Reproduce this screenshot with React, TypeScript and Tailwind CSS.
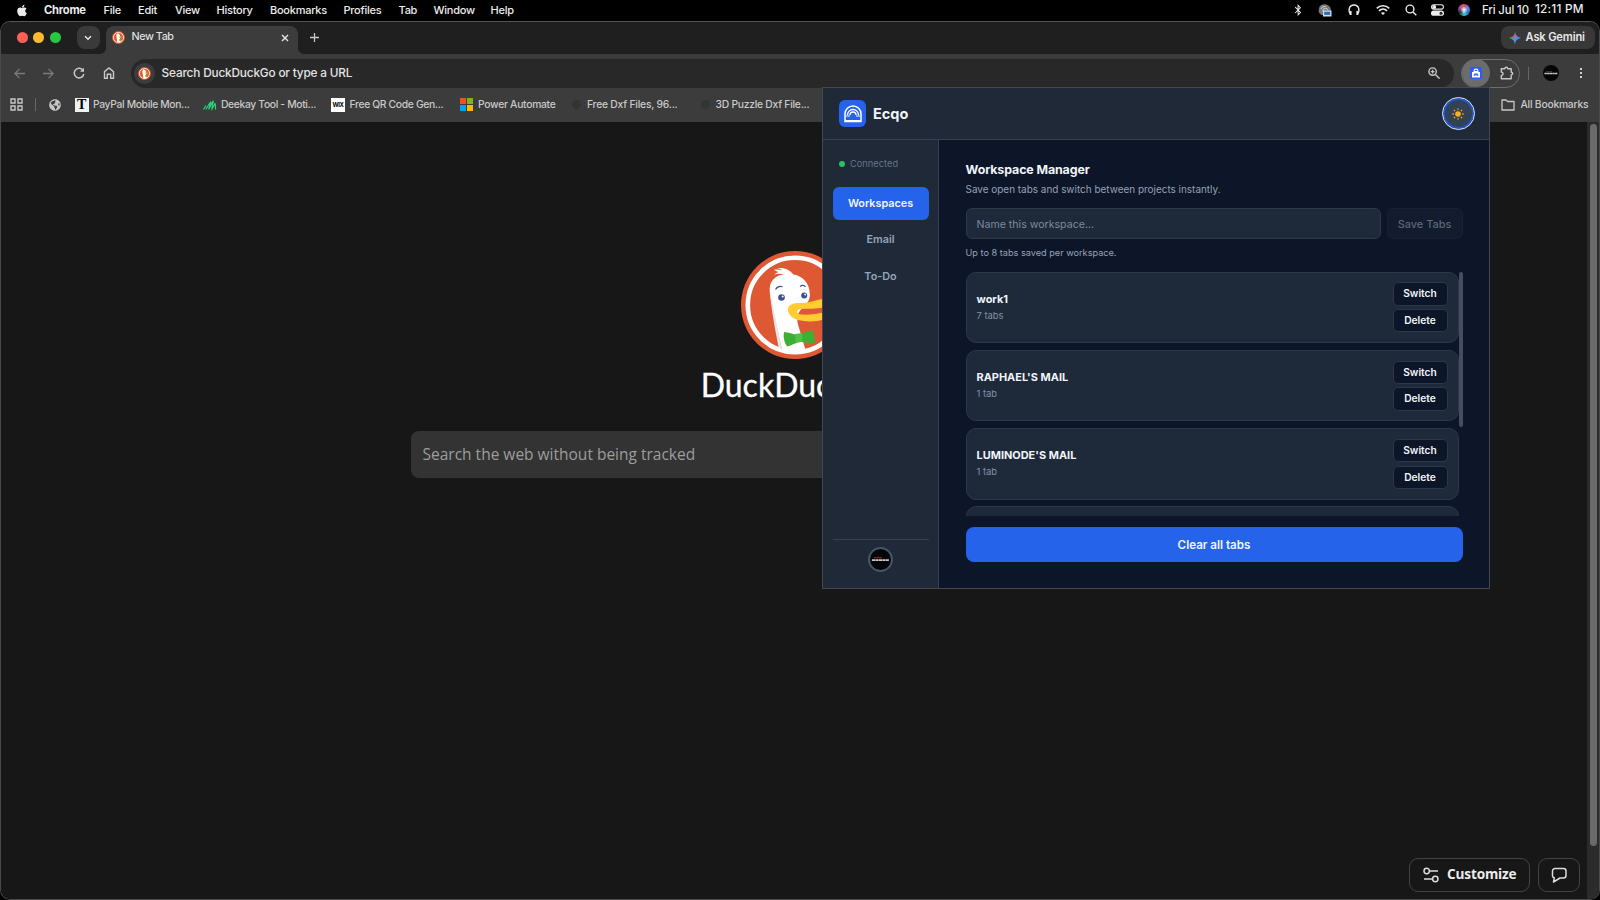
import React from 'react';
import { FaApple, FaBluetoothB, FaGlobeAmericas } from 'react-icons/fa';

const menus = [
  { label: 'File', width: 'w-[34.500px]' },
  { label: 'Edit', width: 'w-[37px]' },
  { label: 'View', width: 'w-[41.500px]' },
  { label: 'History', width: 'w-[53.500px]' },
  { label: 'Bookmarks', width: 'w-[73.500px]' },
  { label: 'Profiles', width: 'w-[55px]' },
  { label: 'Tab', width: 'w-[35px]' },
  { label: 'Window', width: 'w-[57px]' },
  { label: 'Help', width: 'w-[40px]' },
];

const workspaces = [
  { name: 'work1', count: '7 tabs' },
  { name: "RAPHAEL'S MAIL", count: '1 tab' },
  { name: "LUMINODE'S MAIL", count: '1 tab' },
];

function DuckBadge({ className }: { className: string }) {
  return (
    <svg viewBox="0 0 14 14" className={className}>
      <circle cx="7" cy="7" r="7" fill="#de5833" />
      <circle cx="7" cy="7" r="5.4" fill="#de5833" stroke="#fff" strokeWidth="0.9" />
      <path d="M5.2 3.2c1.500-1 3.400 0 3.400 2.200l-.2 2 1 4.300c-1.600.9-2.900.6-3.600.3L4.700 5.400c-.1-1 0-1.700.5-2.200z" fill="#fff" />
      <path d="M7.600 6.400l2.600-.4v1.200l-2.400.4z" fill="#fdd20a" />
      <path d="M7.400 9.200l2.600-.6v2l-2.600-.4z" fill="#4cba3c" />
    </svg>
  );
}

function DuckLogo() {
  return (
    <svg viewBox="0 0 108 108" className="h-[108px] w-[108px]">
      <circle cx="54" cy="54" r="54" fill="#de5833" />
      <circle cx="54" cy="54" r="47.200" fill="#de5833" stroke="#fff" strokeWidth="4.600" />
      {/* head and neck */}
      <path
        d="M33 18.500c4 .2 6.500.2 8.500.8-2-1.300-3.500-1.800-5.500-2 6-1 12 .8 16.500 6.200C62 25 68.500 32 68.800 43c.2 7-3 10-7.800 14.500-5 5-5.500 9-4 16l8 27c-8 2.500-17 2-24-1.500L30.500 52c-2-11-4-20 4-25.500 3-2.200 6-3 8.500-3-3.500-1-7-.8-9.500.3 1-1.500 2.500-2.200 4-2.500-1.800-1-3.500-1.500-4.500-2.800z"
        fill="#fff"
      />
      <path d="M29 42c1 13 4 31 8.500 54l3.500 3L31 50z" fill="#e6e7e8" />
      <circle cx="40.500" cy="46.500" r="3.300" fill="#394f8f" />
      <circle cx="63.200" cy="44.500" r="3" fill="#394f8f" />
      <circle cx="41.700" cy="45.400" r="1" fill="#fff" />
      <circle cx="64.200" cy="43.500" r="0.900" fill="#fff" />
      <path d="M34.500 38.500c2-3 4.500-3.500 7-2.700M59 35.500c2-1.600 4-1.600 5.500.3" fill="none" stroke="#394f8f" strokeWidth="1.200" />
      <path
        d="M47 58c.5-5 6-6.500 14-6 8-.3 14-3 22-4.500v9c-8 1.500-16 1-23 1.500-5 .5-5 5 0 5.500 9 .6 16-1 23-2v7c-8 2.500-19 2.500-26 .5-6-1.600-10.500-6-10-11z"
        fill="#fc3"
      />
      <path d="M43 81c4.500.3 9 2 13 3 5-1 11-4 15.500-5 2 4.500 2.500 9 2 13.500-5-.3-10-1.500-14-1.500-4.500.6-9 3.500-13.500 4.500-3-4.500-4-9.500-3-14.500z" fill="#3fae35" />
      <path d="M54 83l7-1 .5 8.500-7 .8z" fill="#55c045" />
    </svg>
  );
}

function ProfileImage({ className }: { className: string }) {
  return (
    <svg viewBox="0 0 20 20" className={className}>
      <circle cx="10" cy="10" r="10" fill="#050608" />
      <path d="M4 8.300h7" stroke="#9c2b22" strokeWidth="1.200" strokeDasharray="2 .5" />
      <path d="M1.800 10.600h16.400" stroke="#c8c8c8" strokeWidth="1.800" strokeDasharray="3 .3" />
    </svg>
  );
}

function MenuBar() {
  return (
    <div className="flex h-[21px] items-center bg-black pb-px pl-[15px] text-[11px] font-medium tracking-[-0.250px] text-[#ececec]">
      <FaApple className="mr-[15px] h-[13px] w-[14px]" />
      <span className="w-[59.500px] text-[11.200px] font-bold">Chrome</span>
      {menus.map((m) => (
        <span key={m.label} className={m.width}>{m.label}</span>
      ))}
      <div className="ml-auto flex items-center">
        <FaBluetoothB className="mr-[15px] h-3 w-[10px]" />
        <svg viewBox="0 0 14 14" className="mr-[16px] h-[14px] w-[14px]">
          <path d="M1 5.500C1.500 2 5 .8 8 1.500c2.800.6 4.500 2.500 4.800 4.500v6H4C1.500 11.500 0 8.500 1 5.500z" fill="#77797d" />
          <path d="M3 6c.5-2 3-3 5-2.200M5 8.500V6.600c1-1.500 4-1.500 5 0" stroke="#d7d7d7" fill="none" />
          <rect x="5" y="7.500" width="8.500" height="6" fill="#d8dde5" />
          <rect x="6.200" y="8.700" width="6" height="3.200" fill="#2473b8" />
        </svg>
        <svg viewBox="0 0 12 12" className="mr-[16px] h-3 w-3" fill="none" stroke="#ececec">
          <path d="M2 9.500C.3 6.500.8 1 6 1s5.700 5.500 4 8.500" strokeWidth="1.400" />
          <path d="M2.600 7v4M9.400 7v4" strokeWidth="2" />
        </svg>
        <svg viewBox="0 0 14 12" className="mr-[15px] h-3 w-[14px]" fill="none" stroke="#ececec" strokeWidth="1.700">
          <path d="M.8 4.300c3.500-3.400 8.900-3.400 12.400 0M3 6.800c2.300-2.200 5.700-2.200 8 0" />
          <path d="M5 9c1.200-1 2.800-1 4 0l-2 2z" fill="#ececec" stroke="none" />
        </svg>
        <svg viewBox="0 0 12 12" className="mr-[14px] h-3 w-3" fill="none" stroke="#ececec" strokeWidth="1.400">
          <circle cx="5" cy="5" r="3.900" />
          <path d="M8 8l3.300 3.300" />
        </svg>
        <svg viewBox="0 0 13 12" className="mr-[14px] h-3 w-[13px]">
          <rect x=".6" y=".8" width="11.800" height="4.300" rx="2.150" fill="none" stroke="#ececec" strokeWidth="1.100" />
          <circle cx="3.200" cy="3" r="2" fill="#ececec" />
          <rect y="6.500" width="13" height="5.300" rx="2.650" fill="#ececec" />
          <circle cx="10" cy="9.150" r="1.500" fill="#222" />
        </svg>
        <div className="mr-[12px] h-3 w-3 rounded-full bg-[radial-gradient(circle,#f5eefa_5%,transparent_45%),conic-gradient(#d64562,#5a87e6,#2b6fd0,#37c7c0,#24323c,#b94a9a,#e85a5a)]" />
        <span className="w-[53px] text-[11.300px] tracking-[-0.100px] whitespace-pre">Fri Jul 10</span>
        <span className="w-[65px] text-[11.800px] tracking-[0.200px]">12:11 PM</span>
      </div>
    </div>
  );
}

function TabStrip() {
  return (
    <div className="flex h-[32px] shrink-0 items-center bg-[#1f1f1f] pl-[15.800px]">
      <div className="flex gap-[5.700px] pb-px">
        <span className="h-[11px] w-[11px] rounded-full bg-[#fe5f57]" />
        <span className="h-[11px] w-[11px] rounded-full bg-[#febb2e]" />
        <span className="h-[11px] w-[11px] rounded-full bg-[#27c840]" />
      </div>
      <div className="mb-px ml-[15.800px] flex h-[23px] w-[23px] items-center justify-center rounded-lg bg-[#3a3a3a]">
        <svg viewBox="0 0 8 6" className="h-[6px] w-2" fill="none" stroke="#dfe2fa" strokeWidth="1.500">
          <path d="M1 1.200l3 3 3-3" />
        </svg>
      </div>
      <svg viewBox="0 0 6 6" className="h-[6px] w-[6px] self-end" fill="#3c3c3c">
        <path d="M6 0a6 6 0 0 1-6 6h6z" />
      </svg>
      <div className="flex h-[28px] w-[192px] items-center self-end rounded-t-[8px] bg-[#3c3c3c] pb-[5px] pl-[6px]">
        <DuckBadge className="h-[13px] w-[13px]" />
        <span className="ml-[6.500px] w-[150px] text-[10.800px] font-medium tracking-[-0.450px] text-[#dedede]">New Tab</span>
        <svg viewBox="0 0 8 8" className="h-[8px] w-[8px]" stroke="#dedede" strokeWidth="1.500">
          <path d="M1 1l6 6M7 1L1 7" />
        </svg>
      </div>
      <svg viewBox="0 0 6 6" className="h-[6px] w-[6px] self-end" fill="#3c3c3c">
        <path d="M0 0a6 6 0 0 0 6 6H0z" />
      </svg>
      <svg viewBox="0 0 10 10" className="mb-px ml-[6px] h-[9px] w-[9px]" stroke="#c9c9c9" strokeWidth="1.400">
        <path d="M5 0v10M0 5h10" />
      </svg>
      <div className="mr-[4px] mb-px ml-auto flex h-[23px] w-[94px] items-center rounded-lg bg-[#383838] pl-2">
        <svg viewBox="0 0 12 12" className="mr-[4.500px] h-3 w-3">
          <path d="M6 0c.5 3.200 2.300 5.200 6 6H6z" fill="#ea6c8c" />
          <path d="M6 0C5.500 3.200 3.700 5.200 0 6h6z" fill="#e8504a" />
          <path d="M0 6c3.700.8 5.500 2.800 6 6V6L3 5.400z" fill="#42b665" />
          <path d="M6 12c.5-3.200 2.300-5.200 6-6-3-.6-4.600-1.700-5.300-3.500L4.500 7z" fill="#4b8df8" />
        </svg>
        <span className="text-[11.200px] font-semibold tracking-[-0.180px] text-[#e6e6e6]">Ask Gemini</span>
      </div>
    </div>
  );
}

function Toolbar() {
  return (
    <div className="flex h-[38px] items-center bg-[#3c3c3c] pl-[13.800px]">
      <svg viewBox="0 0 12 12" className="mr-[18.700px] h-[11px] w-[11px]" fill="none" stroke="#7b7b7b" strokeWidth="1.400">
        <path d="M12 6H1.500M6 1L1 6l5 5" />
      </svg>
      <svg viewBox="0 0 12 12" className="mr-[18.600px] h-[11px] w-[11px]" fill="none" stroke="#7b7b7b" strokeWidth="1.400">
        <path d="M0 6h10.500M6 1l5 5-5 5" />
      </svg>
      <svg viewBox="0 0 12 12" className="mr-[18px] h-3 w-3" fill="none" stroke="#c7c7c7" strokeWidth="1.500">
        <path d="M10.300 3.800A4.800 4.800 0 1 0 10.800 7" />
        <path d="M11 .8v4H7z" fill="#c7c7c7" stroke="none" />
      </svg>
      <svg viewBox="0 0 12 12" className="mr-[16px] h-3 w-3" fill="none" stroke="#c7c7c7" strokeWidth="1.400">
        <path d="M1.500 11.300V4.700L6 1l4.500 3.700v6.600H7.700V7.300H4.300v4z" />
      </svg>
      <div className="flex h-[29px] w-[1323px] shrink-0 items-center rounded-full bg-[#282828] pl-[3px]">
        <div className="flex h-[21px] w-[21px] items-center justify-center rounded-full bg-[#3c3c3c]">
          <DuckBadge className="h-[13px] w-[13px]" />
        </div>
        <span className="ml-[6.500px] pt-[2px] text-[11.800px] font-medium tracking-[-0.170px] text-[#e3e3e3]">Search DuckDuckGo or type a URL</span>
        <svg viewBox="0 0 12 12" className="mr-[14px] ml-auto h-3 w-3" fill="none" stroke="#c7c7c7" strokeWidth="1.400">
          <circle cx="4.600" cy="4.600" r="3.700" />
          <path d="M7.400 7.400l4.200 4.200M2.800 4.600h3.600M4.600 2.800v3.600" />
        </svg>
      </div>
      <div className="ml-[7px] flex h-[29px] w-[59px] items-center rounded-full border border-[#6e6e6e]">
        <div className="flex h-[28px] w-[28px] shrink-0 items-center justify-center rounded-full bg-[#6c6c6c]">
          <svg viewBox="0 0 12 12" className="h-3 w-3">
            <rect width="12" height="12" rx="1" fill="#2c5cf0" />
            <path d="M2 5h1.500V3.500a2.500 2 0 0 1 5 0V5H10v5.500H2z" fill="#fff" />
            <path d="M4.500 4a1.500 1.200 0 0 1 3 0zM3.500 8.800l1-2.300h3l1 2.300h-2V7.700h-1v1.100z" fill="#2c5cf0" />
          </svg>
        </div>
        <svg viewBox="0 0 14 14" className="ml-[10px] h-[14px] w-[14px]" fill="none" stroke="#c7c7c7" strokeWidth="1.400">
          <path d="M1.300 2.700h3.500c0-2 3-2 3 0h3.400v3.600c2 0 2 2.600 0 2.600v3.800H1.300V9.400c2.400-.2 2.400-3.200 0-3.400z" strokeLinejoin="round" />
        </svg>
      </div>
      <span className="ml-2 h-[13px] w-px bg-[#666]" />
      <ProfileImage className="ml-[14px] h-4 w-4" />
      <div className="ml-[20.500px] flex flex-col gap-[2px]">
        <span className="h-[2px] w-[2px] bg-[#d0d0d0]" />
        <span className="h-[2px] w-[2px] bg-[#d0d0d0]" />
        <span className="h-[2px] w-[2px] bg-[#d0d0d0]" />
      </div>
    </div>
  );
}

function BookmarksBar() {
  return (
    <div className="flex h-[30px] items-center bg-[#3c3c3c] pb-[5px] pl-[10px] text-[10.300px] font-medium tracking-[-0.330px] whitespace-nowrap text-[#c9c9c9]">
      <svg viewBox="0 0 13 13" className="h-[13px] w-[13px]" fill="none" stroke="#c7c7c7" strokeWidth="1.400">
        <path d="M1 1h4v4H1zM8 1h4v4H8zM1 8h4v4H1zM8 8h4v4H8z" />
      </svg>
      <span className="mr-[13px] ml-[12px] h-[13px] w-px bg-[#666]" />
      <FaGlobeAmericas className="mr-[13.500px] h-[12px] w-[12px] text-[#c4c4c4]" />
      <span className="mr-[4.500px] flex h-[14px] w-[14px] items-center justify-center bg-[#eef3f1] font-['Liberation_Serif'] text-[14px] font-bold text-black">T</span>
      <span className="w-[110px]">PayPal Mobile Mon...</span>
      <svg viewBox="0 0 14 12" className="mr-[4px] h-3 w-[14px]" fill="none" stroke="#2bd477" strokeWidth="1.200">
        <path d="M.5 10.500l2.500-4M2.800 10.500L7.500 3C8.500 3 6 8 5.800 10.200L10 2c1 0-1.200 5-1 8L12 4.500c1 .5 0 3.500.7 6" />
      </svg>
      <span className="w-[110px]">Deekay Tool - Moti...</span>
      <span className="mr-[4.500px] flex h-[14px] w-[14px] items-center justify-center bg-white text-[6px] font-bold tracking-[-0.5px] text-black">WIX</span>
      <span className="w-[110.500px]">Free QR Code Gen...</span>
      <span className="mr-[5px] grid h-[13px] w-[13px] grid-cols-2 gap-px">
        <span className="bg-[#f25022]" />
        <span className="bg-[#7fba00]" />
        <span className="bg-[#00a4ef]" />
        <span className="bg-[#ffb900]" />
      </span>
      <span className="w-[94px] tracking-[-0.270px]">Power Automate</span>
      <span className="mr-[6px] h-[9px] w-[9px] rounded-full bg-[#333]" />
      <span className="w-[113.500px] tracking-[-0.220px]">Free Dxf Files, 96...</span>
      <span className="mr-[6px] h-[9px] w-[9px] rounded-full bg-[#333534]" />
      <span className="tracking-[-0.250px]">3D Puzzle Dxf File...</span>
      <svg viewBox="0 0 14 12" className="mr-[6px] ml-auto h-[12px] w-[14px]" fill="none" stroke="#c7c7c7" strokeWidth="1.300">
        <path d="M1 1h4l1.500 1.500H13V11H1z" strokeLinejoin="round" />
      </svg>
      <span className="w-[79.500px] tracking-[-0.220px]">All Bookmarks</span>
    </div>
  );
}

function Popup() {
  return (
    <div className="absolute top-[87px] left-[822px] flex h-[502px] w-[668px] flex-col border border-[#45494b] bg-[#0d1528]">
      <header className="flex h-[52px] shrink-0 items-center border-b border-[#334155] bg-[#1f2937] pr-[14.500px] pl-4">
        <div className="flex h-[27px] w-[27px] items-center justify-center rounded-[6px] bg-[#2563eb]">
          <svg viewBox="0 0 18 18" className="h-[18px] w-[18px]" fill="none" stroke="#fff">
            <path d="M1 16.500V9a8 8 0 0 1 16 0v7.500z" strokeWidth="1.500" />
            <path d="M3.500 10a5.500 5.500 0 0 1 11 0M6 10a3 3 0 0 1 6 0" strokeWidth="1.300" />
            <path d="M2 11h4M12 11h4" strokeWidth="1.200" />
            <path d="M1 16h16" strokeWidth="2" />
          </svg>
        </div>
        <h1 className="ml-[7px] pt-px text-[14.500px] font-bold text-[#f1f5f9]">Ecqo</h1>
        <button className="ml-auto flex h-[33px] w-[33px] items-center justify-center rounded-full border-[1.500px] border-[#dbe4f5] bg-[#334155] inset-ring-2 inset-ring-[#2157c9]">
          <svg viewBox="0 0 12 12" className="h-3 w-3" stroke="#fbb01b" strokeWidth="1.400">
            <circle cx="6" cy="6" r="2.800" fill="#fbb01b" stroke="none" />
            <path d="M6 .4v1.400M6 10.200v1.400M.4 6h1.400M10.200 6h1.400M2 2l1 1M9 9l1 1M10 2L9 3M3 9l-1 1" />
          </svg>
        </button>
      </header>
      <div className="flex min-h-0 flex-1">
        <aside className="flex w-[116px] shrink-0 flex-col border-r border-[#334155] bg-[#1f2937] px-[9.500px] pt-[17px]">
          <div className="flex h-[14px] items-center pl-[6.500px] text-[9.300px] text-[#64748b]">
            <span className="mr-[5px] h-[6px] w-[6px] rounded-full bg-[#22c55e]" />
            Connected
          </div>
          <nav className="mt-4 flex flex-col gap-[3.500px] text-[10.800px] font-semibold text-[#94a3b8]">
            <button className="h-[33px] rounded-[6px] bg-[#2563eb] pt-[2px] text-[#f1f5f9]">Workspaces</button>
            <button className="h-[33px] pt-px">Email</button>
            <button className="h-[33px] pt-px">To-Do</button>
          </nav>
          <div className="mt-auto flex h-[49px] justify-center border-t border-[#334155] pt-[7px]">
            <ProfileImage className="h-[25px] w-[25px] rounded-full border-2 border-[#475569]" />
          </div>
        </aside>
        <main className="flex min-w-0 flex-1 flex-col pt-[21px] pr-[26.500px] pl-[26.500px]">
          <h2 className="h-[18px] text-[12.400px] leading-[18px] font-bold tracking-[-0.100px] text-[#f1f5f9]">Workspace Manager</h2>
          <p className="mt-[3px] h-[14px] text-[9.950px] leading-[14px] text-[#94a3b8]">Save open tabs and switch between projects instantly.</p>
          <div className="mt-[12px] flex gap-[6px]">
            <div className="flex h-[31px] flex-1 items-center rounded-[6px] border border-[#2c394b] bg-[#1e293a] pt-[2px] pl-[10px] text-[10.600px] text-[#7d899a]">
              Name this workspace...
            </div>
            <button className="h-[31px] w-[76px] rounded-[6px] border border-[#182234] bg-[#121c2e] pt-px text-[10.900px] font-medium text-[#5d6777]">
              Save Tabs
            </button>
          </div>
          <p className="mt-[7px] h-[12px] text-[9.170px] leading-[13px] text-[#94a3b8]">Up to 8 tabs saved per workspace.</p>
          <div className="mt-[13.500px] flex h-[244px]">
            <div className="flex flex-1 flex-col gap-[6.700px] overflow-hidden">
              {workspaces.map((w) => (
                <div key={w.name} className="flex h-[71.600px] shrink-0 items-center justify-between rounded-[10px] border border-[#2b384a] bg-[#1e293a] px-[10px]">
                  <div>
                    <div className="text-[10.950px] leading-[16px] font-bold text-[#f1f5f9]">{w.name}</div>
                    <div className="text-[9.400px] leading-[17px] text-[#8592a5]">{w.count}</div>
                  </div>
                  <div className="flex flex-col gap-[3.500px]">
                    <button className="h-[23.300px] w-[55px] rounded-[5px] border border-[#2b384a] bg-[#0d1528] text-[10.200px] font-semibold text-[#f1f5f9]">Switch</button>
                    <button className="h-[23.300px] w-[55px] rounded-[5px] border border-[#2b384a] bg-[#0d1528] text-[10.200px] font-semibold text-[#f1f5f9]">Delete</button>
                  </div>
                </div>
              ))}
              {/* next card, clipped by the scroll area */}
              <div className="h-[72px] shrink-0 rounded-[10px] border border-[#2b384a] bg-[#1e293a]" />
            </div>
            <div className="h-[155px] w-1 rounded-full bg-[#434f61]" />
          </div>
          <button className="mt-[11.500px] h-[35px] rounded-[8px] bg-[#2563eb] pt-[2px] text-[11.600px] font-semibold text-[#f1f5f9]">Clear all tabs</button>
        </main>
      </div>
    </div>
  );
}

export default function App() {
  return (
    <div className="relative h-[900px] w-[1600px] overflow-hidden bg-black font-['Inter',sans-serif]">
      <MenuBar />
      <div className="flex h-[879px] flex-col overflow-hidden rounded-[10px] border border-[#4a4a4a] border-t-[#555]">
        <TabStrip />
        <div className="-mx-px"><Toolbar /></div>
        <div className="-mx-px"><BookmarksBar /></div>
        <div className="-mr-px flex min-h-0 flex-1 bg-[#171717]">
          <div className="flex flex-1 flex-col items-center pt-[129px] pl-px">
            <DuckLogo />
            <div className="mt-[4px] h-[44px] font-['Lato',sans-serif] text-[32px] leading-[44px] text-white [-webkit-text-stroke:0.300px_white]">DuckDuckGo</div>
            <div className="mt-[24px] flex h-[47px] w-[768px] items-center rounded-[8px] bg-[#333] pl-[12px] font-['Open_Sans',sans-serif] text-[15.500px] font-medium text-[#9d9d9d]">
              Search the web without being tracked
            </div>
            <div className="mt-auto mr-[7.500px] mb-[7px] flex gap-[8px] self-end">
              <button className="flex h-[34px] w-[121px] items-center rounded-[9px] border border-[#434343] pb-px pl-[13px] font-['Open_Sans',sans-serif] text-[13.600px] font-bold tracking-[-0.150px] text-[#ececec]">
                <svg viewBox="0 0 16 16" className="mr-[8.500px] h-4 w-4" fill="none" stroke="#dcdcdc" strokeWidth="1.500">
                  <circle cx="3.700" cy="4" r="2.700" />
                  <circle cx="12.300" cy="12" r="2.700" />
                  <path d="M6.500 4H15M1 12h8.500" />
                </svg>
                Customize
              </button>
              <button className="flex h-[34px] w-[42px] items-center justify-center rounded-[9px] border border-[#434343]">
                <svg viewBox="0 0 16 16" className="h-4 w-4" fill="none" stroke="#dcdcdc" strokeWidth="1.500">
                  <path d="M4 1.500h8.500A2.500 2.500 0 0 1 15 4v4.500a2.500 2.500 0 0 1-2.500 2.500H9l-6.500 4 .8-4.200A2 2 0 0 1 1.500 8.500V4A2.500 2.500 0 0 1 4 1.500z" strokeLinejoin="round" />
                </svg>
              </button>
            </div>
          </div>
          <div className="w-[13px] bg-[#2b2b2b] pt-[2px] pl-[3px]">
            <div className="h-[722px] w-[7px] rounded-full bg-[#6b6b6b]" />
          </div>
        </div>
      </div>
      <Popup />
    </div>
  );
}
